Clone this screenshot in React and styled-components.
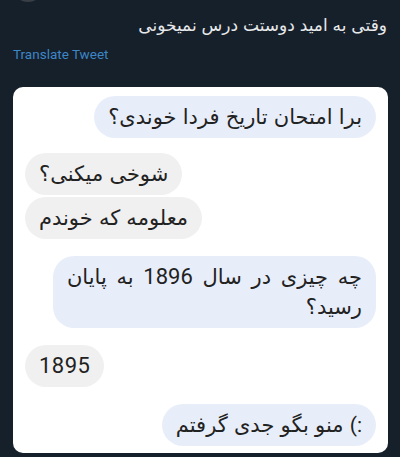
import React from "react";
import styled, { createGlobalStyle } from "styled-components";

const GlobalStyle = createGlobalStyle`
  html, body {
    margin: 0;
    padding: 0;
    background: #16202b;
  }
  * {
    box-sizing: border-box;
  }
`;

const Page = styled.div`
  position: relative;
  width: 400px;
  height: 457px;
  overflow: hidden;
  background: #16202b;
  padding: 13px 12px 0 13px;
  font-family: Roboto, "DejaVu Sans", sans-serif;
`;

const AvatarEdge = styled.div`
  position: absolute;
  left: 12px;
  top: -30px;
  width: 32px;
  height: 32px;
  border-radius: 50%;
  background: #3a3f45;
`;

const TweetText = styled.div`
  direction: rtl;
  text-align: right;
  color: #e7e9ea;
  font-size: 17px;
  line-height: 24px;
  word-spacing: 0.7px;
  padding-right: 1px;
`;

const Translate = styled.div`
  margin-top: 8px;
  color: #3d86c6;
  font-size: 13.5px;
  line-height: 18px;
`;

const Card = styled.div`
  margin-top: 24px;
  width: 375px;
  height: 366px;
  background: #ffffff;
  border-radius: 10px;
  padding: 9px 12px 6px 12px;
  display: flex;
  flex-direction: column;
`;

const Bubble = styled.div`
  direction: rtl;
  align-self: ${(p) => (p.$mine ? "flex-end" : "flex-start")};
  background: ${(p) => (p.$mine ? "#e8eef9" : "#f0f0f0")};
  color: #222222;
  font-size: 21px;
  line-height: 30px;
  word-spacing: ${(p) => p.$spacing || 1}px;
  padding: 6px 14px;
  border-radius: 21px;
  margin-top: ${(p) => p.$gap}px;
  white-space: nowrap;
`;

const Num = styled.span`
  font-family: Roboto, sans-serif;
  font-size: 22px;
  letter-spacing: 0.5px;
`;

export default function App() {
  return (
    <Page>
      <GlobalStyle />
      <AvatarEdge />
      <TweetText>وقتی به امید دوستت درس نمیخونی</TweetText>
      <Translate>Translate Tweet</Translate>
      <Card>
        <Bubble $mine $gap={0}>برا امتحان تاریخ فردا خوندی؟</Bubble>
        <Bubble $gap={15}>شوخی میکنی؟</Bubble>
        <Bubble $gap={2}>معلومه که خوندم</Bubble>
        <Bubble $mine $gap={17} $spacing={4.5}>
          چه چیزی در سال <Num>1896</Num> به پایان
          <br />
          رسید؟
        </Bubble>
        <Bubble $gap={17}>
          <Num>1895</Num>
        </Bubble>
        <Bubble $mine $gap={17}>:) منو بگو جدی گرفتم</Bubble>
      </Card>
    </Page>
  );
}
